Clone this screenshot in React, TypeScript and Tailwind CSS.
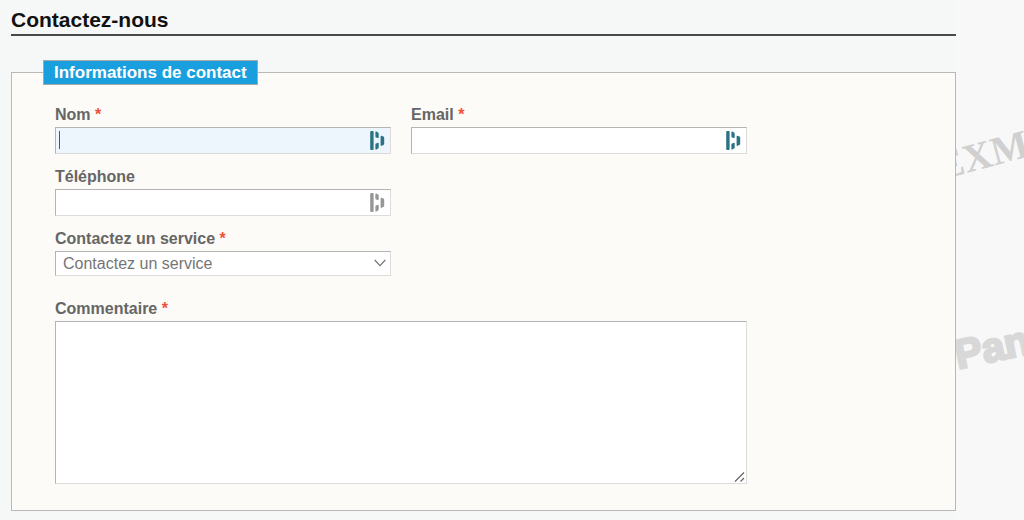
import type { ReactNode } from "react";

const fieldBorder =
  "border border-t-[#b4b4b4] border-l-[#b4b4b4] border-r-[#dcdcdc] border-b-[#dcdcdc] outline-none";

function Field({
  id,
  label,
  required,
  className = "",
  children,
}: {
  id: string;
  label: string;
  required?: boolean;
  className?: string;
  children: ReactNode;
}) {
  return (
    <div className={className}>
      <label
        htmlFor={id}
        className="block text-[16px] leading-6 font-bold text-[#666666]"
      >
        {label}
        {required && <span className="text-[#f0503c]"> *</span>}
      </label>
      <div className="relative">{children}</div>
    </div>
  );
}

function AutofillIcon({ className }: { className: string }) {
  return (
    <svg
      viewBox="0 0 15 20"
      aria-hidden="true"
      className={`pointer-events-none absolute top-1 right-1.5 h-5 w-[15px] ${className}`}
      fill="currentColor"
    >
      <rect x="0.2" y="0" width="3.4" height="19" rx="1" />
      <path d="M5.4 1.2Q5.4 0.2 6.4 0.6L8 1.4Q8.7 1.8 8.7 2.6V6.2Q8.7 7.2 7.9 7L6.1 6.4Q5.4 6.2 5.4 5.4Z" />
      <path d="M5.4 13.4Q5.4 12.6 6.1 12.4L7.9 11.8Q8.7 11.6 8.7 12.6V16.4Q8.7 17.2 8 17.6L6.4 18.6Q5.4 19 5.4 17.8Z" />
      <path d="M10.6 5.6Q10.6 4.4 11.6 4.8L13.4 5.6Q14.2 6 14.2 6.8V12.8Q14.2 13.6 13.4 14L11.6 14.8Q10.6 15.2 10.6 14Z" />
    </svg>
  );
}

function TextField({
  id,
  label,
  type = "text",
  required,
  active,
}: {
  id: string;
  label: string;
  type?: string;
  required?: boolean;
  active?: boolean;
}) {
  return (
    <Field id={id} label={label} required={required}>
      <input
        id={id}
        name={id}
        type={type}
        required={required}
        className={`block h-[27px] w-full pr-7 pl-1 text-[16px] text-[#666666] ${fieldBorder} ${active ? "bg-[#edf5fd]" : "bg-white"}`}
      />
      {active && (
        <span className="pointer-events-none absolute top-1 left-1 h-[18px] w-px bg-[#555555]" />
      )}
      <AutofillIcon
        className={required ? "text-[#2b7285]" : "text-[#969696]"}
      />
    </Field>
  );
}

function Partners() {
  return (
    <aside className="w-[68px] shrink-0 overflow-hidden bg-[#f8f8f8]">
      <svg
        viewBox="0 0 68 520"
        className="block h-[520px] w-full"
        aria-hidden="true"
      >
        <text
          transform="translate(-15 180) rotate(-15)"
          fill="#d0d0d0"
          fontSize="40"
          fontWeight="700"
          className="font-['Liberation_Serif',serif]"
        >
          EXM
        </text>
        <text
          transform="translate(2 369) rotate(-12)"
          fill="#d8d8d8"
          fontSize="41"
          fontWeight="700"
          className="font-['Liberation_Sans',sans-serif]"
          stroke="#d8d8d8"
          strokeWidth="2.5"
        >
          Pan
        </text>
      </svg>
    </aside>
  );
}

export default function App() {
  return (
    <div className="flex min-h-screen bg-[#f6f8f8] font-['Liberation_Sans',Arial,sans-serif]">
      <main className="min-w-0 flex-1 pl-[11px]">
        <h1 className="border-b-2 border-[#4a4a4a] pt-2 pb-0.5 text-[21px] leading-6 font-bold text-[#111111]">
          Contactez-nous
        </h1>
        <form className="mt-6">
          <fieldset className="border border-[#b8b8b8] bg-[#fcfbf7] px-[43px] pb-[26px]">
            <legend className="-ml-3 border border-[#a8a8a8] bg-[#1a9fde] px-2.5 text-[17px] leading-[23px] font-bold text-white">
              Informations de contact
            </legend>
            <div className="grid max-w-[692px] grid-cols-2 gap-x-5 gap-y-[11px] pt-[18px]">
              <TextField id="nom" label="Nom" required active />
              <TextField id="email" label="Email" type="email" required />
              <TextField id="telephone" label="Téléphone" type="tel" />
              <Field
                id="service"
                label="Contactez un service"
                required
                className="col-start-1"
              >
                <select
                  id="service"
                  name="service"
                  required
                  className={`block h-[25px] w-full appearance-none bg-white pr-7 pl-[7px] text-[16px] leading-5 text-[#757575] ${fieldBorder}`}
                >
                  <option value="">Contactez un service</option>
                </select>
                <svg
                  viewBox="0 0 12 8"
                  aria-hidden="true"
                  className="pointer-events-none absolute top-2 right-[5px] h-2 w-3"
                  fill="none"
                  stroke="#777777"
                  strokeWidth="1.3"
                >
                  <path d="M0.7 1L6 6.6L11.3 1" />
                </svg>
              </Field>
              <Field
                id="commentaire"
                label="Commentaire"
                required
                className="col-span-2 pt-2.5"
              >
                <textarea
                  id="commentaire"
                  name="commentaire"
                  required
                  className={`block h-[163px] w-full resize-none bg-white p-1 text-[16px] text-[#666666] ${fieldBorder}`}
                />
                <svg
                  viewBox="0 0 12 12"
                  aria-hidden="true"
                  className="pointer-events-none absolute right-px bottom-px size-3"
                  fill="none"
                  stroke="#666666"
                  strokeWidth="1.2"
                >
                  <path d="M1 10.5L10 1.5M6.5 10.5L10 7" />
                </svg>
              </Field>
            </div>
          </fieldset>
        </form>
      </main>
      <Partners />
    </div>
  );
}
